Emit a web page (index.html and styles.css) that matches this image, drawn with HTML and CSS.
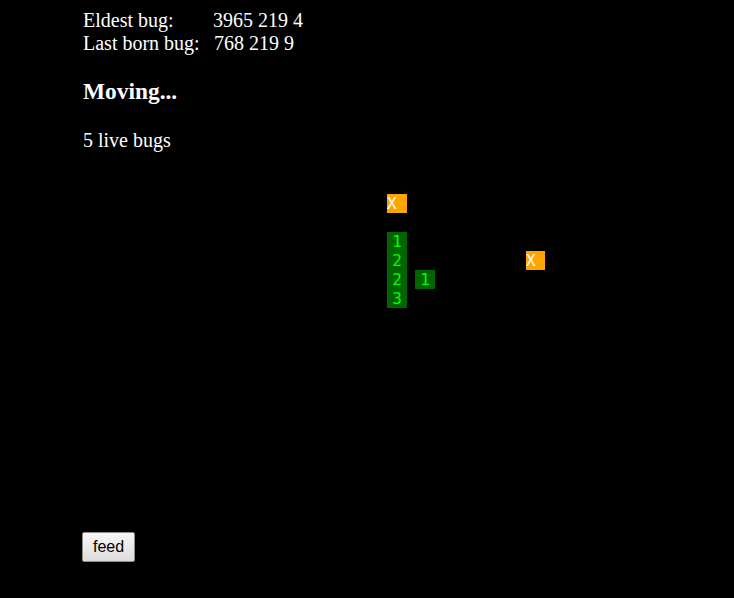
FILE: index.html
```html
<!DOCTYPE html>
<html>
<head>
<meta charset="utf-8">
<title>Bugs</title>
<link rel="stylesheet" href="styles.css">
</head>
<body>
<div class="page">
  <div class="stats">
    <div class="label">Eldest bug:</div><div class="value">3965 219 4</div>
    <div class="label">Last born bug:</div><div class="value value-shift">768 219 9</div>
  </div>
  <h3 class="status">Moving...</h3>
  <p class="count">5 live bugs</p>
  <div class="board">
    <div class="cell food" style="left:304px; top:22px">X</div>
    <div class="cell bug" style="left:304px; top:60px">1</div>
    <div class="cell bug" style="left:304px; top:79px">2</div>
    <div class="cell bug" style="left:304px; top:98px">2</div>
    <div class="cell bug" style="left:304px; top:117px">3</div>
    <div class="cell bug" style="left:332px; top:98px">1</div>
    <div class="cell food narrow" style="left:443px; top:79px">X</div>
  </div>
  <div class="actions">
    <button class="feed" type="button">feed</button>
  </div>
</div>
</body>
</html>
```
FILE: styles.css
```css
html, body {
  background: #000;
}
body {
  margin: 8px;
  color: #fff;
  font-family: "Liberation Serif", "Times New Roman", serif;
  font-size: 20px;
}
.page {
  padding-left: 75px;
  padding-top: 1px;
}
.stats {
  display: grid;
  grid-template-columns: 130px auto;
  line-height: 23px;
}
.value-shift {
  padding-left: 1px;
}
.status {
  font-size: 23.4px;
  font-weight: bold;
  margin: 23.4px 0;
}
.count {
  margin: 20px 0;
}
.board {
  position: relative;
  height: 360px;
}
.cell {
  position: absolute;
  width: 20px;
  height: 19px;
  font-family: "DejaVu Sans Mono", monospace;
  font-size: 16px;
  line-height: 19px;
}
.cell.narrow {
  width: 19px;
}
.food {
  background: #ffa500;
  color: #fff;
  text-align: left;
}
.bug {
  background: #006400;
  color: #00ff00;
  text-align: center;
}
.actions {
  display: flex;
}
.feed {
  box-sizing: border-box;
  height: 30px;
  padding: 0 10px;
  font-family: "Liberation Sans", Arial, sans-serif;
  font-size: 16px;
  color: #000;
  background: linear-gradient(#f7f7f7, #dcdcdc);
  border: 1px solid #8e8e8e;
  border-radius: 2px;
  margin-left: -1px;
}
```
